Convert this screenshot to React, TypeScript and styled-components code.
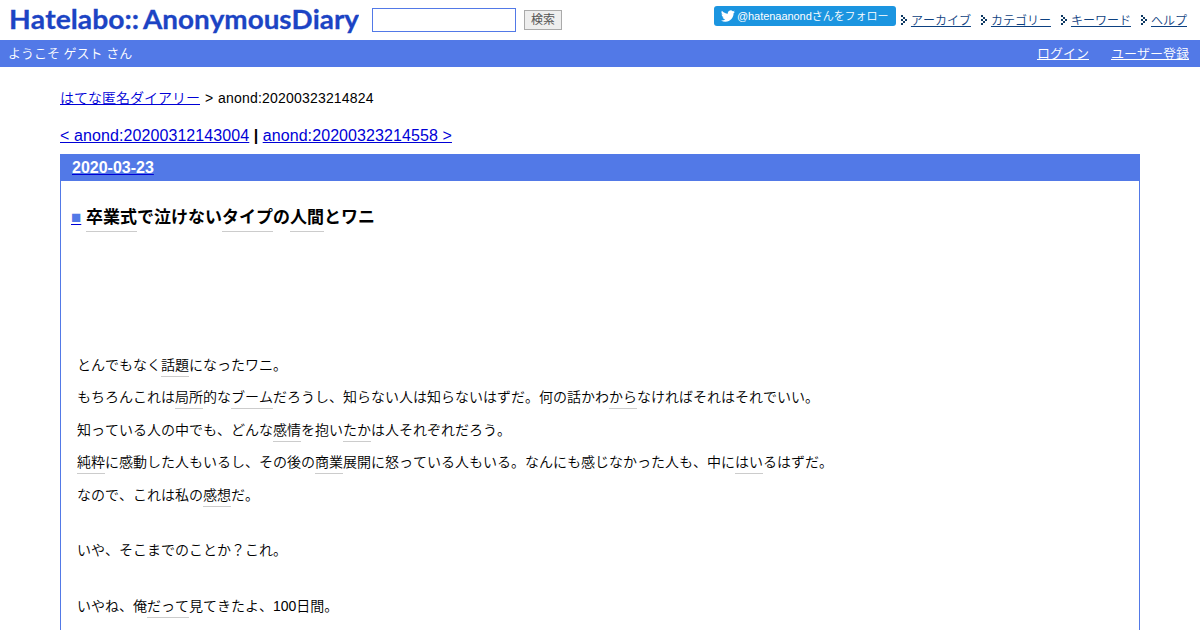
import { Fragment } from 'react';
import styled, { createGlobalStyle } from 'styled-components';

const menuLinks = ['アーカイブ', 'カテゴリー', 'キーワード', 'ヘルプ'];

// text between [ ] is a keyword link
const sections = [
    [
        'とんでもなく[話題]になったワニ。',
        'もちろんこれは[局所]的な[ブーム]だろうし、知らない人は知らないはずだ。何の話かわ[から]なければそれはそれでいい。',
        '知っている人の中でも、どんな[感情]を抱い[たか]は人それぞれだろう。',
        '[純粋]に感動した人もいるし、その後の[商業]展開に怒っている人もいる。なんにも感じなかった人も、中に[はい]るはずだ。',
        'なので、これは私の[感想]だ。',
    ],
    ['いや、そこまでのことか？これ。'],
    ['いやね、俺[だって]見てきたよ、100日間。'],
];

const withKeywords = (text: string) =>
    text.split(/[[\]]/).map((part, i) =>
        i % 2 ? (
            <Keyword key={i} href="#">
                {part}
            </Keyword>
        ) : (
            <Fragment key={i}>{part}</Fragment>
        )
    );

const Arrow = () => (
    <svg width="6" height="10" viewBox="0 0 6 10" fill="#0f3a63" shapeRendering="crispEdges">
        <path d="M0 0h2v2h-2zM2 2h2v2h-2zM4 4h2v2h-2zM2 6h2v2h-2zM0 8h2v2h-2zM0 4h2v2h-2z" />
    </svg>
);

const TwitterBird = () => (
    <svg width="14" height="14" viewBox="0 0 24 24" fill="#fff">
        <path d="M23.95 4.57a10 10 0 0 1-2.82.77 4.96 4.96 0 0 0 2.16-2.72c-.95.55-2 .96-3.13 1.18a4.92 4.92 0 0 0-8.38 4.48C7.69 8.1 4.07 6.13 1.64 3.16a4.93 4.93 0 0 0 1.52 6.57 4.9 4.9 0 0 1-2.23-.61v.06a4.92 4.92 0 0 0 3.95 4.83 5 5 0 0 1-2.21.08 4.94 4.94 0 0 0 4.6 3.42A9.87 9.87 0 0 1 0 19.54a13.99 13.99 0 0 0 7.56 2.21c9.05 0 14-7.5 14-13.98 0-.21 0-.42-.02-.63a9.94 9.94 0 0 0 2.41-2.57z" />
    </svg>
);

const App = () => {
    return (
        <>
            <GlobalStyle />
            <Header>
                <Logo width="350" height="40" viewBox="0 0 350 40">
                    <text x="0" y="29" textLength="130" lengthAdjust="spacingAndGlyphs">
                        Hatelabo::
                    </text>
                    <text x="134" y="29" textLength="216" lengthAdjust="spacingAndGlyphs">
                        AnonymousDiary
                    </text>
                </Logo>
                <SearchInput type="text" />
                <SearchButton type="submit">検索</SearchButton>
                <FollowButton href="#">
                    <TwitterBird />
                    <span>@hatenaanondさんをフォロー</span>
                </FollowButton>
                <Menu>
                    {menuLinks.map((label) => (
                        <MenuItem key={label}>
                            <Arrow />
                            <a href="#">{label}</a>
                        </MenuItem>
                    ))}
                </Menu>
            </Header>
            <UserBar>
                <span>ようこそ ゲスト さん</span>
                <UserLinks>
                    <a href="#">ログイン</a>
                    <a href="#">ユーザー登録</a>
                </UserLinks>
            </UserBar>
            <Content>
                <Breadcrumb>
                    <a href="#">はてな匿名ダイアリー</a> &gt; <span>anond:20200323214824</span>
                </Breadcrumb>
                <Pager>
                    <a href="#">&lt; anond:20200312143004</a>
                    <b> | </b>
                    <a href="#">anond:20200323214558 &gt;</a>
                </Pager>
                <Day>
                    <DayTitle>
                        <a href="#">
                            <span>2020-03-23</span>
                        </a>
                    </DayTitle>
                    <EntryTitle>
                        <Permalink href="#">
                            <span>■</span>
                        </Permalink>
                        <span>{withKeywords('[卒業式]で泣けない[タイプ]の[人間]とワニ')}</span>
                    </EntryTitle>
                    <EntryBody>
                        {sections.map((lines, i) => (
                            <Section key={i}>
                                {lines.map((line) => (
                                    <Line key={line}>{withKeywords(line)}</Line>
                                ))}
                            </Section>
                        ))}
                    </EntryBody>
                </Day>
            </Content>
        </>
    );
};

export default App;

const GlobalStyle = createGlobalStyle`
    * {
        box-sizing: border-box;
    }

    body {
        margin: 0;
        height: 630px;
        overflow: hidden;
        background-color: #fff;
        color: #000;
        font-family: 'Liberation Sans', 'Noto Sans CJK JP', sans-serif;
        font-weight: 350;
        font-kerning: none;
    }

    a {
        color: #0000d6;
    }
`;

const Header = styled.header`
    display: flex;
    align-items: center;
    height: 40px;
    padding: 0 13px 0 9px;
`;

const Logo = styled.svg`
    flex: none;
    fill: #1c44c4;
    stroke: #1c44c4;
    stroke-width: 0.3px;
    font-family: Lato, sans-serif;
    font-size: 27px;
    font-weight: 700;
`;

const SearchInput = styled.input`
    width: 144px;
    height: 24px;
    margin-left: 13px;
    border: 1px solid #5279e7;
    background-color: #fff;
`;

const SearchButton = styled.button`
    width: 38px;
    height: 20px;
    margin-left: 8px;
    padding: 0;
    border: 1px solid #aaa;
    background-color: #eee;
    color: #555;
    font-family: inherit;
    font-size: 12px;
    line-height: 17px;
`;

const FollowButton = styled.a`
    display: flex;
    align-items: center;
    gap: 2px;
    width: 182px;
    height: 20px;
    margin: 0 5px 8px auto;
    padding-left: 7px;
    border-radius: 3px;
    background-color: #1b95e0;
    color: #fff;
    font-size: 11px;
    letter-spacing: -0.05px;
    line-height: 20px;
    text-decoration: none;
    white-space: nowrap;
`;

const Menu = styled.nav`
    display: flex;
    gap: 10px;
    font-size: 12px;
    line-height: 20px;
`;

const MenuItem = styled.div`
    display: flex;
    align-items: center;
    gap: 4px;

    a {
        padding-top: 1px;
        color: #0d4181;
    }
`;

const UserBar = styled.div`
    display: flex;
    justify-content: space-between;
    height: 27px;
    padding: 0 11px 0 8px;
    background-color: #5279e7;
    color: #fff;
    font-size: 13px;
    line-height: 27px;
`;

const UserLinks = styled.div`
    display: flex;
    gap: 22px;

    a {
        color: #fff;
    }
`;

const Content = styled.main`
    margin: 21px 60px 0;
`;

const Breadcrumb = styled.div`
    font-size: 14px;
    line-height: 20px;
    word-spacing: 1px;

    span {
        letter-spacing: 0.2px;
    }
`;

const Pager = styled.div`
    margin-top: 18px;
    font-size: 16px;
    line-height: 20px;

    a {
        letter-spacing: 0.09px;
    }

    b {
        font-weight: 700;
        white-space: pre;
    }
`;

const Day = styled.section`
    height: 500px;
    margin-top: 8px;
    border: 1px solid #5279e7;
`;

const DayTitle = styled.h2`
    height: 26px;
    margin: 0;
    padding-left: 11px;
    background-color: #5279e7;
    font-size: 16px;
    line-height: 25px;

    span {
        color: #fff;
    }
`;

const EntryTitle = styled.h3`
    display: flex;
    gap: 5px;
    margin: 25px 0 0 10px;
    font-size: 17px;
    line-height: 24px;
`;

const Permalink = styled.a`
    width: 10px;

    span {
        color: #5279e7;
    }
`;

const Keyword = styled.a`
    padding-bottom: 3px;
    border-bottom: 1px solid #ccc;
    color: inherit;
    text-decoration: none;

    h3 & {
        padding-bottom: 4px;
    }
`;

const EntryBody = styled.div`
    display: flex;
    flex-direction: column;
    gap: 23px;
    margin: 118.5px 0 0 16px;
`;

const Section = styled.div`
    font-size: 14px;
    line-height: 32.5px;
`;

const Line = styled.p`
    margin: 0;
    white-space: nowrap;
`;
